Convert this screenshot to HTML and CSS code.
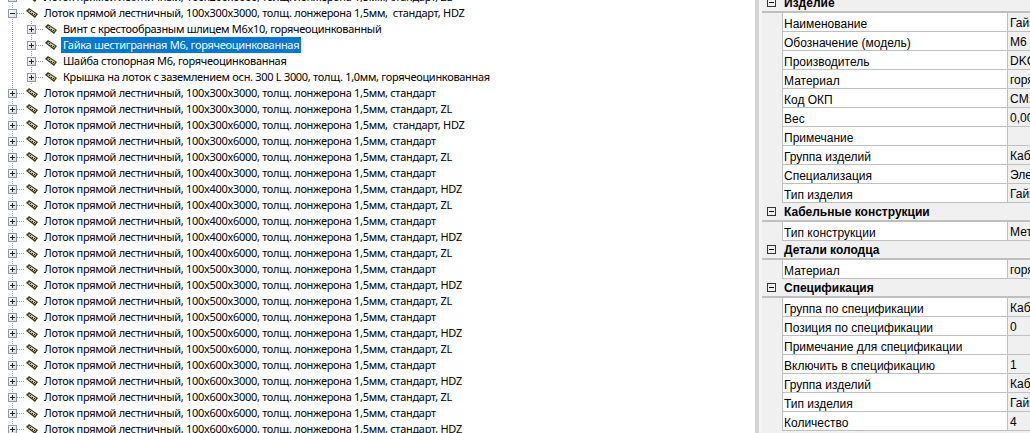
FILE: index.html
```html
<!DOCTYPE html>
<html lang="en">
<head>
    <meta charset="UTF-8">
    <title>Изделие</title>
    <link rel="stylesheet" href="styles.css">
</head>
<body>
    <svg class="sprites" width="0" height="0">
        <symbol id="tray" viewBox="0 0 16 12">
            <path d="M2 4 L5 1 L14 7 L11 11 Z" fill="#3c3c22"/>
            <path d="M4 4 L6 3 L12 7 L11 9 Z" fill="#d6d69a"/>
            <path d="M6 4 L7 5 M8 6 L9 7 M10 7 L11 8" stroke="#2a2a14" stroke-width="1"/>
        </symbol>
    </svg>
    <div class="window">
        <div class="tree" id="tree"></div>
        <div class="splitter"></div>
        <div class="props">
            <div class="section"><span class="toggle"></span><b>Изделие</b></div>
            <div class="row"><span class="name">Наименование</span><span class="value">Гайка</span></div>
            <div class="row"><span class="name">Обозначение (модель)</span><span class="value">М6</span></div>
            <div class="row"><span class="name">Производитель</span><span class="value">DKC</span></div>
            <div class="row"><span class="name">Материал</span><span class="value">горяч</span></div>
            <div class="row"><span class="name">Код ОКП</span><span class="value">CM1</span></div>
            <div class="row"><span class="name">Вес</span><span class="value">0,00</span></div>
            <div class="row"><span class="name">Примечание</span><span class="value"></span></div>
            <div class="row"><span class="name">Группа изделий</span><span class="value">Кабе</span></div>
            <div class="row"><span class="name">Специализация</span><span class="value">Элек</span></div>
            <div class="row"><span class="name">Тип изделия</span><span class="value">Гайк</span></div>
            <div class="section"><span class="toggle"></span><b>Кабельные конструкции</b></div>
            <div class="row"><span class="name">Тип конструкции</span><span class="value">Мет</span></div>
            <div class="section"><span class="toggle"></span><b>Детали колодца</b></div>
            <div class="row"><span class="name">Материал</span><span class="value">горяч</span></div>
            <div class="section"><span class="toggle"></span><b>Спецификация</b></div>
            <div class="row"><span class="name">Группа по спецификации</span><span class="value">Кабе</span></div>
            <div class="row"><span class="name">Позиция по спецификации</span><span class="value">0</span></div>
            <div class="row"><span class="name">Примечание для спецификации</span><span class="value"></span></div>
            <div class="row"><span class="name">Включить в спецификацию</span><span class="value">1</span></div>
            <div class="row"><span class="name">Группа изделий</span><span class="value">Кабе</span></div>
            <div class="row"><span class="name">Тип изделия</span><span class="value">Гайк</span></div>
            <div class="row"><span class="name">Количество</span><span class="value">4</span></div>
        </div>
    </div>
    <script>
        const base = 'Лоток прямой лестничный, ';
        const mid = ', толщ. лонжерона 1,5мм, ';
        const rows = [
            ['plus', 0, base + '100x200x6000' + mid + 'стандарт, ZL'],
            ['minus', 0, base + '100x300x3000' + mid + ' стандарт, HDZ'],
            ['plus', 1, 'Винт с крестообразным шлицем М6x10, горячеоцинкованный'],
            ['plus', 1, 'Гайка шестигранная М6, горячеоцинкованная', true],
            ['plus', 1, 'Шайба стопорная М6, горячеоцинкованная'],
            ['plus', 1, 'Крышка на лоток с заземлением осн. 300 L 3000, толщ. 1,0мм, горячеоцинкованная'],
            ['plus', 0, base + '100x300x3000' + mid + 'стандарт'],
            ['plus', 0, base + '100x300x3000' + mid + 'стандарт, ZL'],
            ['plus', 0, base + '100x300x6000' + mid + ' стандарт, HDZ'],
            ['plus', 0, base + '100x300x6000' + mid + 'стандарт'],
            ['plus', 0, base + '100x300x6000' + mid + 'стандарт, ZL']
        ];
        ['400', '500', '600'].forEach(function(w) {
            ['3000', '6000'].forEach(function(l) {
                ['стандарт', 'стандарт, HDZ', 'стандарт, ZL'].forEach(function(end) {
                    rows.push(['plus', 0, base + '100x' + w + 'x' + l + mid + end]);
                });
            });
        });

        const tree = document.getElementById('tree');
        rows.slice(0, 28).forEach(function(r) {
            const row = document.createElement('div');
            row.className = 'node' + (r[1] ? ' child' : '');
            row.innerHTML = '<span class="box ' + r[0] + '"></span><span class="dots"></span>' +
                '<svg class="icon"><use href="#tray"/></svg>' +
                '<span class="label' + (r[3] ? ' selected' : '') + '">' + r[2] + '</span>';
            tree.appendChild(row);
        });
    </script>
</body>
</html>
```
FILE: styles.css
```css
* {
    box-sizing: border-box;
    margin: 0;
    padding: 0;
}

html, body {
    height: 100%;
    overflow: hidden;
}

body {
    background: #fff;
    color: #000;
}

.sprites {
    display: block;
}

.window {
    display: flex;
    height: 433px;
    overflow: hidden;
}

/* left tree */
.tree {
    width: 755px;
    flex: none;
    margin-top: -11px;
    font-family: "Noto Sans", sans-serif;
    font-size: 11px;
    letter-spacing: -0.3px;
    background-image: linear-gradient(#9a9a9a 50%, transparent 50%);
    background-size: 1px 2px;
    background-position: 12px 0;
    background-repeat: repeat-y;
}

.node {
    display: flex;
    align-items: center;
    height: 16px;
    padding-left: 8px;
    white-space: pre;
}

.node.child {
    padding-left: 27px;
    background-image: linear-gradient(#9a9a9a 50%, transparent 50%);
    background-size: 1px 2px;
    background-position: 31px 0;
    background-repeat: repeat-y;
}

.box {
    width: 9px;
    height: 9px;
    flex: none;
    border: 1px solid #8a9aa8;
    background: linear-gradient(135deg, #fff, #d8d8e0);
    position: relative;
}

.box::before {
    content: "";
    position: absolute;
    left: 1px;
    top: 3px;
    width: 5px;
    height: 1px;
    background: #222;
}

.box.plus::after {
    content: "";
    position: absolute;
    left: 3px;
    top: 1px;
    width: 1px;
    height: 5px;
    background: #222;
}

.dots {
    width: 7px;
    height: 1px;
    flex: none;
    background-image: linear-gradient(to right, #9a9a9a 50%, transparent 50%);
    background-size: 2px 1px;
}

.icon {
    width: 16px;
    height: 12px;
    flex: none;
    margin-right: 2px;
}

.label {
    padding: 0 2px;
    line-height: 16px;
    height: 16px;
    background: #fff;
}

.label.selected {
    background: #0078d7;
    color: #fff;
}

.splitter {
    width: 7px;
    flex: none;
    background: linear-gradient(to right, #d4d4d4 4px, #f4f4f4 4px);
}

/* right property grid */
.props {
    flex: 1;
    margin-top: -6px;
    background: #f0f0f0;
    font-family: "Liberation Sans", sans-serif;
    font-size: 12px;
}

.section {
    display: flex;
    align-items: center;
    height: 19px;
    border-bottom: 2px solid #c0c0c0;
}

.toggle {
    width: 9px;
    height: 9px;
    flex: none;
    margin: 0 8px 0 5px;
    border: 1px solid #333;
    position: relative;
}

.toggle::before {
    content: "";
    position: absolute;
    left: 1px;
    top: 3px;
    width: 5px;
    height: 1px;
    background: #000;
}

.row {
    display: flex;
    height: 19px;
    margin-left: 20px;
    line-height: 20px;
    border-bottom: 1px solid #c0c0c0;
    border-left: 1px solid #c0c0c0;
}

.name {
    width: 225px;
    flex: none;
    background: #fff;
    padding: 1px 0 0 1px;
    border-right: 1px solid #c0c0c0;
}

.value {
    flex: 1;
    background: #f0f0f0;
    padding: 0 0 0 2px;
    white-space: nowrap;
    overflow: hidden;
}
```
